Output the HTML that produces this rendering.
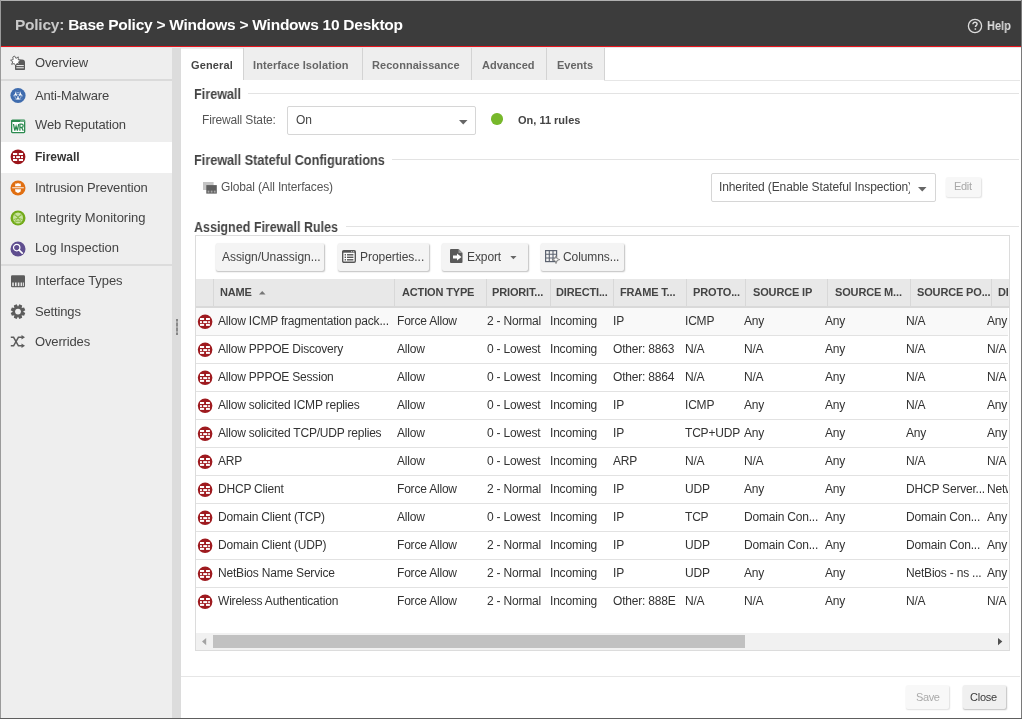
<!DOCTYPE html>
<html><head><meta charset="utf-8"><style>
html,body{margin:0;padding:0;width:1022px;height:719px;overflow:hidden;background:#fff;}
body{position:relative;font-family:"Liberation Sans", sans-serif;}
.t{position:absolute;white-space:nowrap;line-height:normal;font-family:"Liberation Sans", sans-serif;will-change:transform;}
.r{position:absolute;}
</style></head><body>
<div class="r" style="left:0px;top:0px;width:1022px;height:719px;background:#fff;"></div>
<div class="r" style="left:1px;top:1px;width:1020px;height:45px;background:#3c3c3c;"></div>
<div class="r" style="left:1px;top:46px;width:1020px;height:1px;background:#e8141c;"></div>
<div class="r" style="left:1px;top:47px;width:1020px;height:1px;background:#e4e7e7;"></div>
<div class="t" style="left:15px;top:16px;font-size:15.5px;font-weight:700;color:#fff;letter-spacing:-0.25px;"><span style="color:#c9c9c9">Policy:</span> Base Policy &gt; Windows &gt; Windows 10 Desktop</div>
<svg class="r" style="left:967px;top:18px" width="16" height="16" viewBox="0 0 16 16"><circle cx="8" cy="8" r="6.6" fill="none" stroke="#dcdcdc" stroke-width="1.3"/><path d="M5.9 6.3 C5.9 4.9 6.9 4.2 8 4.2 C9.2 4.2 10.1 5 10.1 6 C10.1 7.3 8.4 7.5 8.4 9.1" fill="none" stroke="#dcdcdc" stroke-width="1.4"/><rect x="7.6" y="10.3" width="1.5" height="1.5" fill="#dcdcdc"/></svg>
<div class="t" style="left:987px;top:19px;font-size:12px;transform:scaleX(0.915);transform-origin:0 0;font-weight:700;color:#dedede;letter-spacing:0px;">Help</div>
<div class="r" style="left:1px;top:48px;width:171px;height:670px;background:#eeeeee;"></div>
<div class="r" style="left:1px;top:79px;width:171px;height:2px;background:#dadada;"></div>
<div class="r" style="left:1px;top:264px;width:171px;height:2px;background:#dcdcdc;"></div>
<div class="r" style="left:1px;top:142px;width:171px;height:31px;background:#ffffff;"></div>
<div class="t" style="left:35px;top:55px;font-size:13px;color:#444;letter-spacing:-0.15px;">Overview</div>
<div class="t" style="left:35px;top:88px;font-size:13px;color:#444;letter-spacing:-0.15px;">Anti-Malware</div>
<div class="t" style="left:35px;top:117px;font-size:13px;color:#444;letter-spacing:-0.15px;">Web Reputation</div>
<div class="t" style="left:35px;top:150px;font-size:12px;font-weight:700;color:#333;letter-spacing:0.0px;">Firewall</div>
<div class="t" style="left:35px;top:180px;font-size:13px;color:#444;letter-spacing:-0.15px;">Intrusion Prevention</div>
<div class="t" style="left:35px;top:210px;font-size:13px;color:#444;letter-spacing:0.0px;">Integrity Monitoring</div>
<div class="t" style="left:35px;top:240px;font-size:13px;color:#444;letter-spacing:-0.04px;">Log Inspection</div>
<div class="t" style="left:35px;top:273px;font-size:13px;color:#444;letter-spacing:-0.08px;">Interface Types</div>
<div class="t" style="left:35px;top:304px;font-size:13px;color:#444;letter-spacing:-0.15px;">Settings</div>
<div class="t" style="left:35px;top:334px;font-size:13px;color:#444;letter-spacing:-0.15px;">Overrides</div>
<div class="r" style="left:172px;top:48px;width:9px;height:670px;background:#dcdcdc;"></div>
<div class="r" style="left:176px;top:319px;width:2px;height:16px;background:linear-gradient(#858585 0 2px,#a9a9a9 2px 4px,#8a8a8a 4px 7px,#a9a9a9 7px 9px,#8a8a8a 9px 12px,#a9a9a9 12px 14px,#858585 14px 16px);"></div>
<div class="r" style="left:181px;top:48px;width:423px;height:32px;background:#eeeeee;"></div>
<div class="r" style="left:181px;top:48px;width:63px;height:33px;background:#ffffff;"></div>
<div class="r" style="left:181px;top:48px;width:63px;height:1px;background:#ececec;"></div>
<div class="r" style="left:243px;top:48px;width:1px;height:32px;background:#d3d3d3;"></div>
<div class="r" style="left:362px;top:48px;width:1px;height:32px;background:#d3d3d3;"></div>
<div class="r" style="left:471px;top:48px;width:1px;height:32px;background:#d3d3d3;"></div>
<div class="r" style="left:546px;top:48px;width:1px;height:32px;background:#d3d3d3;"></div>
<div class="r" style="left:604px;top:48px;width:1px;height:32px;background:#d3d3d3;"></div>
<div class="r" style="left:604px;top:80px;width:416px;height:1px;background:#e6e6e6;"></div>
<div class="t" style="left:191px;top:59px;font-size:11px;font-weight:700;color:#444;letter-spacing:0.12px;">General</div>
<div class="t" style="left:253px;top:59px;font-size:11px;font-weight:700;color:#666;letter-spacing:0.08px;">Interface Isolation</div>
<div class="t" style="left:372px;top:59px;font-size:11px;font-weight:700;color:#666;letter-spacing:0.06px;">Reconnaissance</div>
<div class="t" style="left:482px;top:59px;font-size:11px;font-weight:700;color:#666;">Advanced</div>
<div class="t" style="left:557px;top:59px;font-size:11px;font-weight:700;color:#666;">Events</div>
<div class="t" style="left:194px;top:86px;font-size:14px;transform:scaleX(0.902);transform-origin:0 0;font-weight:700;color:#444;letter-spacing:0px;">Firewall</div>
<div class="r" style="left:248px;top:93px;width:771px;height:1px;background:#e3e3e3;"></div>
<div class="t" style="left:202px;top:113px;font-size:12px;color:#555;letter-spacing:-0.15px;">Firewall State:</div>
<div class="r" style="left:287px;top:106px;width:189px;height:29px;background:#fff;border:1px solid #d6d6d6;box-sizing:border-box;border-radius:2px;"></div>
<div class="t" style="left:296px;top:113px;font-size:12px;color:#444;">On</div>
<svg class="r" style="left:459px;top:120px" width="9" height="5"><path d="M0 0H8.5L4.25 4.5Z" fill="#666"/></svg>
<div class="r" style="left:491px;top:113px;width:11.5px;height:11.5px;border-radius:50%;background:#77b82b"></div>
<div class="t" style="left:518px;top:114px;font-size:11px;font-weight:700;color:#444;">On, 11 rules</div>
<div class="t" style="left:194px;top:152px;font-size:14px;transform:scaleX(0.905);transform-origin:0 0;font-weight:700;color:#444;letter-spacing:0px;">Firewall Stateful Configurations</div>
<div class="r" style="left:392px;top:159px;width:627px;height:1px;background:#e3e3e3;"></div>
<svg class="r" style="left:202px;top:181px" width="16" height="14" viewBox="0 0 16 14"><rect x="1" y="1" width="10.6" height="8" fill="#c4c4c4"/><rect x="4.3" y="4.1" width="10.5" height="8.5" fill="#5e5e5e"/><g fill="#a8a8a8"><rect x="5.6" y="9.6" width="1.8" height="2"/><rect x="8.7" y="9.6" width="1.8" height="2"/><rect x="11.8" y="9.6" width="1.8" height="2"/></g></svg>
<div class="t" style="left:221px;top:180px;font-size:12px;color:#555;letter-spacing:-0.15px;">Global (All Interfaces)</div>
<div class="r" style="left:711px;top:173px;width:225px;height:29px;background:#fff;border:1px solid #d6d6d6;box-sizing:border-box;border-radius:2px;"></div>
<div class="t" style="left:719px;top:180px;width:191px;overflow:hidden;font-size:12px;color:#444;letter-spacing:-0.12px">Inherited (Enable Stateful Inspection)</div>
<svg class="r" style="left:918px;top:187px" width="9" height="5"><path d="M0 0H8.5L4.25 4.5Z" fill="#666"/></svg>
<div class="r" style="left:946px;top:177px;width:35px;height:20px;background:#f7f7f7;border-radius:2px;box-shadow:0.5px 1px 1.5px rgba(0,0,0,0.12);"></div>
<div class="t" style="left:954px;top:180px;font-size:11px;color:#a8a8a8;letter-spacing:-0.3px;">Edit</div>
<div class="t" style="left:194px;top:219px;font-size:14px;transform:scaleX(0.894);transform-origin:0 0;font-weight:700;color:#444;letter-spacing:0px;">Assigned Firewall Rules</div>
<div class="r" style="left:346px;top:226px;width:673px;height:1px;background:#e3e3e3;"></div>
<div class="r" style="left:195px;top:235px;width:815px;height:416px;background:#fff;border:1px solid #dcdcdc;box-sizing:border-box;"></div>
<div class="r" style="left:216px;top:243px;width:108px;height:28px;background:#f4f4f4;border-radius:2px;box-shadow:0.5px 1px 1.5px rgba(0,0,0,0.25);"></div>
<div class="r" style="left:338px;top:243px;width:91px;height:28px;background:#f4f4f4;border-radius:2px;box-shadow:0.5px 1px 1.5px rgba(0,0,0,0.25);"></div>
<div class="r" style="left:442px;top:243px;width:86px;height:28px;background:#f4f4f4;border-radius:2px;box-shadow:0.5px 1px 1.5px rgba(0,0,0,0.25);"></div>
<div class="r" style="left:541px;top:243px;width:83px;height:28px;background:#f4f4f4;border-radius:2px;box-shadow:0.5px 1px 1.5px rgba(0,0,0,0.25);"></div>
<div class="t" style="left:222px;top:250px;font-size:12px;color:#444;letter-spacing:-0.05px;">Assign/Unassign...</div>
<div class="t" style="left:360px;top:250px;font-size:12px;color:#444;letter-spacing:-0.04px;">Properties...</div>
<div class="t" style="left:467px;top:250px;font-size:12px;color:#444;letter-spacing:-0.1px;">Export</div>
<div class="t" style="left:563px;top:250px;font-size:12px;color:#444;letter-spacing:-0.1px;">Columns...</div>
<svg class="r" style="left:342px;top:250px" width="14" height="13" viewBox="0 0 14 13"><rect x="0.7" y="0.7" width="12.6" height="11.6" rx="1.2" fill="#fff" stroke="#555" stroke-width="1.4"/><rect x="0.7" y="0.7" width="12.6" height="2" fill="#555"/><rect x="9" y="1.2" width="1.2" height="1" fill="#ccc"/><rect x="11" y="1.2" width="1.2" height="1" fill="#ccc"/><g fill="#555"><rect x="2.6" y="4.1" width="1.4" height="1.4"/><rect x="5" y="4.1" width="6.4" height="1.4"/><rect x="2.6" y="6.6" width="1.4" height="1.4"/><rect x="5" y="6.6" width="6.4" height="1.4"/><rect x="2.6" y="9.1" width="1.4" height="1.4"/><rect x="5" y="9.1" width="6.4" height="1.4"/></g></svg>
<svg class="r" style="left:450px;top:249px" width="13" height="15" viewBox="0 0 13 15"><path d="M0 1Q0 0 1 0H8.5L12.5 4V13Q12.5 14 11.5 14H1Q0 14 0 13Z" fill="#5a5a5a"/><path d="M8.5 0V4H12.5" fill="#999"/><path d="M3 6.5H7V4.5L11.5 8L7 11.5V9.5H3Z" fill="#fff"/></svg>
<svg class="r" style="left:510px;top:255.5px" width="7" height="4"><path d="M0.3 0H6.5L3.4 3.3Z" fill="#666"/></svg>
<svg class="r" style="left:545px;top:250px" width="15" height="15" viewBox="0 0 15 15"><rect x="0.6" y="0.6" width="11" height="11" fill="none" stroke="#5c6370" stroke-width="1.2"/><path d="M4.3 0.6V11.6M8 0.6V11.6M0.6 4.3H11.6M0.6 8H11.6" stroke="#5c6370" stroke-width="1.1"/><path d="M11 5.8L11.9 8.6L14.8 9.6L11.9 10.6L11 13.6L10.1 10.6L7.2 9.6L10.1 8.6Z" fill="#fff" stroke="#777" stroke-width="0.8" stroke-linejoin="round"/></svg>
<div class="r" style="left:196px;top:279px;width:813px;height:27px;background:#e8e8e8;"></div>
<div class="r" style="left:196px;top:306px;width:813px;height:2px;background:#d9d9d9;"></div>
<div class="r" style="left:213px;top:279px;width:1px;height:27px;background:#d8d8d8;"></div>
<div class="r" style="left:394px;top:279px;width:1px;height:27px;background:#d8d8d8;"></div>
<div class="r" style="left:486px;top:279px;width:1px;height:27px;background:#d8d8d8;"></div>
<div class="r" style="left:550px;top:279px;width:1px;height:27px;background:#d8d8d8;"></div>
<div class="r" style="left:613px;top:279px;width:1px;height:27px;background:#d8d8d8;"></div>
<div class="r" style="left:686px;top:279px;width:1px;height:27px;background:#d8d8d8;"></div>
<div class="r" style="left:745px;top:279px;width:1px;height:27px;background:#d8d8d8;"></div>
<div class="r" style="left:827px;top:279px;width:1px;height:27px;background:#d8d8d8;"></div>
<div class="r" style="left:910px;top:279px;width:1px;height:27px;background:#d8d8d8;"></div>
<div class="r" style="left:991px;top:279px;width:1px;height:27px;background:#d8d8d8;"></div>
<div class="r" style="left:196px;top:279px;width:812px;height:27px;overflow:hidden">
<div class="t" style="left:24px;top:7px;font-size:11px;font-weight:700;color:#444;letter-spacing:-0.15px;">NAME</div>
<div class="t" style="left:206px;top:7px;font-size:11px;font-weight:700;color:#444;letter-spacing:-0.15px;">ACTION TYPE</div>
<div class="t" style="left:296px;top:7px;font-size:11px;font-weight:700;color:#444;letter-spacing:-0.15px;">PRIORIT...</div>
<div class="t" style="left:360px;top:7px;font-size:11px;font-weight:700;color:#444;letter-spacing:-0.15px;">DIRECTI...</div>
<div class="t" style="left:424px;top:7px;font-size:11px;font-weight:700;color:#444;letter-spacing:-0.15px;">FRAME T...</div>
<div class="t" style="left:497px;top:7px;font-size:11px;font-weight:700;color:#444;letter-spacing:-0.15px;">PROTO...</div>
<div class="t" style="left:557px;top:7px;font-size:11px;font-weight:700;color:#444;letter-spacing:-0.15px;">SOURCE IP</div>
<div class="t" style="left:639px;top:7px;font-size:11px;font-weight:700;color:#444;letter-spacing:-0.15px;">SOURCE M...</div>
<div class="t" style="left:721px;top:7px;font-size:11px;font-weight:700;color:#444;letter-spacing:-0.15px;">SOURCE PO...</div>
<div class="t" style="left:802px;top:7px;font-size:11px;font-weight:700;color:#444;letter-spacing:-0.15px;">DE</div>
</div>
<svg class="r" style="left:259px;top:291px" width="7" height="4"><path d="M0 3.5H6.5L3.25 0Z" fill="#777"/></svg>
<div class="r" style="left:196px;top:308px;width:812px;height:325px;overflow:hidden">
<div class="r" style="left:0px;top:0px;width:812px;height:27px;background:#f9f9f9;"></div>
<div class="r" style="left:0px;top:27px;width:812px;height:1px;background:#e2e2e2;"></div>
<div class="r" style="left:1px;top:6px;line-height:0"><svg width="16" height="16" viewBox="0 0 16 16"><circle cx="8.1" cy="7.8" r="7.3" fill="#9e1a1f"/><g fill="#fff"><rect x="3" y="4" width="4.1" height="2"/><rect x="9" y="4" width="3.9" height="2"/><rect x="3" y="7.1" width="1.9" height="2"/><rect x="6.2" y="7.1" width="4" height="2"/><rect x="11.2" y="7.1" width="1.7" height="2"/><rect x="3" y="9.9" width="4.1" height="2"/><rect x="9" y="9.9" width="3.9" height="2"/></g></svg></div>
<div class="t" style="left:22px;top:6px;font-size:12px;color:#333;letter-spacing:-0.2px;">Allow ICMP fragmentation pack...</div>
<div class="t" style="left:201px;top:6px;font-size:12px;color:#333;letter-spacing:-0.2px;">Force Allow</div>
<div class="t" style="left:291px;top:6px;font-size:12px;color:#333;letter-spacing:-0.2px;">2 - Normal</div>
<div class="t" style="left:354px;top:6px;font-size:12px;color:#333;letter-spacing:-0.2px;">Incoming</div>
<div class="t" style="left:417px;top:6px;font-size:12px;color:#333;letter-spacing:-0.2px;">IP</div>
<div class="t" style="left:489px;top:6px;font-size:12px;color:#333;letter-spacing:-0.2px;">ICMP</div>
<div class="t" style="left:548px;top:6px;font-size:12px;color:#333;letter-spacing:-0.2px;">Any</div>
<div class="t" style="left:629px;top:6px;font-size:12px;color:#333;letter-spacing:-0.2px;">Any</div>
<div class="t" style="left:710px;top:6px;font-size:12px;color:#333;letter-spacing:-0.2px;">N/A</div>
<div class="t" style="left:791px;top:6px;font-size:12px;color:#333;letter-spacing:-0.2px;">Any</div>
<div class="r" style="left:0px;top:55px;width:812px;height:1px;background:#e2e2e2;"></div>
<div class="r" style="left:1px;top:34px;line-height:0"><svg width="16" height="16" viewBox="0 0 16 16"><circle cx="8.1" cy="7.8" r="7.3" fill="#9e1a1f"/><g fill="#fff"><rect x="3" y="4" width="4.1" height="2"/><rect x="9" y="4" width="3.9" height="2"/><rect x="3" y="7.1" width="1.9" height="2"/><rect x="6.2" y="7.1" width="4" height="2"/><rect x="11.2" y="7.1" width="1.7" height="2"/><rect x="3" y="9.9" width="4.1" height="2"/><rect x="9" y="9.9" width="3.9" height="2"/></g></svg></div>
<div class="t" style="left:22px;top:34px;font-size:12px;color:#333;letter-spacing:-0.2px;">Allow PPPOE Discovery</div>
<div class="t" style="left:201px;top:34px;font-size:12px;color:#333;letter-spacing:-0.2px;">Allow</div>
<div class="t" style="left:291px;top:34px;font-size:12px;color:#333;letter-spacing:-0.2px;">0 - Lowest</div>
<div class="t" style="left:354px;top:34px;font-size:12px;color:#333;letter-spacing:-0.2px;">Incoming</div>
<div class="t" style="left:417px;top:34px;font-size:12px;color:#333;letter-spacing:-0.2px;">Other: 8863</div>
<div class="t" style="left:489px;top:34px;font-size:12px;color:#333;letter-spacing:-0.2px;">N/A</div>
<div class="t" style="left:548px;top:34px;font-size:12px;color:#333;letter-spacing:-0.2px;">N/A</div>
<div class="t" style="left:629px;top:34px;font-size:12px;color:#333;letter-spacing:-0.2px;">Any</div>
<div class="t" style="left:710px;top:34px;font-size:12px;color:#333;letter-spacing:-0.2px;">N/A</div>
<div class="t" style="left:791px;top:34px;font-size:12px;color:#333;letter-spacing:-0.2px;">N/A</div>
<div class="r" style="left:0px;top:83px;width:812px;height:1px;background:#e2e2e2;"></div>
<div class="r" style="left:1px;top:62px;line-height:0"><svg width="16" height="16" viewBox="0 0 16 16"><circle cx="8.1" cy="7.8" r="7.3" fill="#9e1a1f"/><g fill="#fff"><rect x="3" y="4" width="4.1" height="2"/><rect x="9" y="4" width="3.9" height="2"/><rect x="3" y="7.1" width="1.9" height="2"/><rect x="6.2" y="7.1" width="4" height="2"/><rect x="11.2" y="7.1" width="1.7" height="2"/><rect x="3" y="9.9" width="4.1" height="2"/><rect x="9" y="9.9" width="3.9" height="2"/></g></svg></div>
<div class="t" style="left:22px;top:62px;font-size:12px;color:#333;letter-spacing:-0.2px;">Allow PPPOE Session</div>
<div class="t" style="left:201px;top:62px;font-size:12px;color:#333;letter-spacing:-0.2px;">Allow</div>
<div class="t" style="left:291px;top:62px;font-size:12px;color:#333;letter-spacing:-0.2px;">0 - Lowest</div>
<div class="t" style="left:354px;top:62px;font-size:12px;color:#333;letter-spacing:-0.2px;">Incoming</div>
<div class="t" style="left:417px;top:62px;font-size:12px;color:#333;letter-spacing:-0.2px;">Other: 8864</div>
<div class="t" style="left:489px;top:62px;font-size:12px;color:#333;letter-spacing:-0.2px;">N/A</div>
<div class="t" style="left:548px;top:62px;font-size:12px;color:#333;letter-spacing:-0.2px;">N/A</div>
<div class="t" style="left:629px;top:62px;font-size:12px;color:#333;letter-spacing:-0.2px;">Any</div>
<div class="t" style="left:710px;top:62px;font-size:12px;color:#333;letter-spacing:-0.2px;">N/A</div>
<div class="t" style="left:791px;top:62px;font-size:12px;color:#333;letter-spacing:-0.2px;">N/A</div>
<div class="r" style="left:0px;top:111px;width:812px;height:1px;background:#e2e2e2;"></div>
<div class="r" style="left:1px;top:90px;line-height:0"><svg width="16" height="16" viewBox="0 0 16 16"><circle cx="8.1" cy="7.8" r="7.3" fill="#9e1a1f"/><g fill="#fff"><rect x="3" y="4" width="4.1" height="2"/><rect x="9" y="4" width="3.9" height="2"/><rect x="3" y="7.1" width="1.9" height="2"/><rect x="6.2" y="7.1" width="4" height="2"/><rect x="11.2" y="7.1" width="1.7" height="2"/><rect x="3" y="9.9" width="4.1" height="2"/><rect x="9" y="9.9" width="3.9" height="2"/></g></svg></div>
<div class="t" style="left:22px;top:90px;font-size:12px;color:#333;letter-spacing:-0.2px;">Allow solicited ICMP replies</div>
<div class="t" style="left:201px;top:90px;font-size:12px;color:#333;letter-spacing:-0.2px;">Allow</div>
<div class="t" style="left:291px;top:90px;font-size:12px;color:#333;letter-spacing:-0.2px;">0 - Lowest</div>
<div class="t" style="left:354px;top:90px;font-size:12px;color:#333;letter-spacing:-0.2px;">Incoming</div>
<div class="t" style="left:417px;top:90px;font-size:12px;color:#333;letter-spacing:-0.2px;">IP</div>
<div class="t" style="left:489px;top:90px;font-size:12px;color:#333;letter-spacing:-0.2px;">ICMP</div>
<div class="t" style="left:548px;top:90px;font-size:12px;color:#333;letter-spacing:-0.2px;">Any</div>
<div class="t" style="left:629px;top:90px;font-size:12px;color:#333;letter-spacing:-0.2px;">Any</div>
<div class="t" style="left:710px;top:90px;font-size:12px;color:#333;letter-spacing:-0.2px;">N/A</div>
<div class="t" style="left:791px;top:90px;font-size:12px;color:#333;letter-spacing:-0.2px;">Any</div>
<div class="r" style="left:0px;top:139px;width:812px;height:1px;background:#e2e2e2;"></div>
<div class="r" style="left:1px;top:118px;line-height:0"><svg width="16" height="16" viewBox="0 0 16 16"><circle cx="8.1" cy="7.8" r="7.3" fill="#9e1a1f"/><g fill="#fff"><rect x="3" y="4" width="4.1" height="2"/><rect x="9" y="4" width="3.9" height="2"/><rect x="3" y="7.1" width="1.9" height="2"/><rect x="6.2" y="7.1" width="4" height="2"/><rect x="11.2" y="7.1" width="1.7" height="2"/><rect x="3" y="9.9" width="4.1" height="2"/><rect x="9" y="9.9" width="3.9" height="2"/></g></svg></div>
<div class="t" style="left:22px;top:118px;font-size:12px;color:#333;letter-spacing:-0.2px;">Allow solicited TCP/UDP replies</div>
<div class="t" style="left:201px;top:118px;font-size:12px;color:#333;letter-spacing:-0.2px;">Allow</div>
<div class="t" style="left:291px;top:118px;font-size:12px;color:#333;letter-spacing:-0.2px;">0 - Lowest</div>
<div class="t" style="left:354px;top:118px;font-size:12px;color:#333;letter-spacing:-0.2px;">Incoming</div>
<div class="t" style="left:417px;top:118px;font-size:12px;color:#333;letter-spacing:-0.2px;">IP</div>
<div class="t" style="left:489px;top:118px;font-size:12px;color:#333;letter-spacing:-0.2px;">TCP+UDP</div>
<div class="t" style="left:548px;top:118px;font-size:12px;color:#333;letter-spacing:-0.2px;">Any</div>
<div class="t" style="left:629px;top:118px;font-size:12px;color:#333;letter-spacing:-0.2px;">Any</div>
<div class="t" style="left:710px;top:118px;font-size:12px;color:#333;letter-spacing:-0.2px;">Any</div>
<div class="t" style="left:791px;top:118px;font-size:12px;color:#333;letter-spacing:-0.2px;">Any</div>
<div class="r" style="left:0px;top:167px;width:812px;height:1px;background:#e2e2e2;"></div>
<div class="r" style="left:1px;top:146px;line-height:0"><svg width="16" height="16" viewBox="0 0 16 16"><circle cx="8.1" cy="7.8" r="7.3" fill="#9e1a1f"/><g fill="#fff"><rect x="3" y="4" width="4.1" height="2"/><rect x="9" y="4" width="3.9" height="2"/><rect x="3" y="7.1" width="1.9" height="2"/><rect x="6.2" y="7.1" width="4" height="2"/><rect x="11.2" y="7.1" width="1.7" height="2"/><rect x="3" y="9.9" width="4.1" height="2"/><rect x="9" y="9.9" width="3.9" height="2"/></g></svg></div>
<div class="t" style="left:22px;top:146px;font-size:12px;color:#333;letter-spacing:-0.2px;">ARP</div>
<div class="t" style="left:201px;top:146px;font-size:12px;color:#333;letter-spacing:-0.2px;">Allow</div>
<div class="t" style="left:291px;top:146px;font-size:12px;color:#333;letter-spacing:-0.2px;">0 - Lowest</div>
<div class="t" style="left:354px;top:146px;font-size:12px;color:#333;letter-spacing:-0.2px;">Incoming</div>
<div class="t" style="left:417px;top:146px;font-size:12px;color:#333;letter-spacing:-0.2px;">ARP</div>
<div class="t" style="left:489px;top:146px;font-size:12px;color:#333;letter-spacing:-0.2px;">N/A</div>
<div class="t" style="left:548px;top:146px;font-size:12px;color:#333;letter-spacing:-0.2px;">N/A</div>
<div class="t" style="left:629px;top:146px;font-size:12px;color:#333;letter-spacing:-0.2px;">Any</div>
<div class="t" style="left:710px;top:146px;font-size:12px;color:#333;letter-spacing:-0.2px;">N/A</div>
<div class="t" style="left:791px;top:146px;font-size:12px;color:#333;letter-spacing:-0.2px;">N/A</div>
<div class="r" style="left:0px;top:195px;width:812px;height:1px;background:#e2e2e2;"></div>
<div class="r" style="left:1px;top:174px;line-height:0"><svg width="16" height="16" viewBox="0 0 16 16"><circle cx="8.1" cy="7.8" r="7.3" fill="#9e1a1f"/><g fill="#fff"><rect x="3" y="4" width="4.1" height="2"/><rect x="9" y="4" width="3.9" height="2"/><rect x="3" y="7.1" width="1.9" height="2"/><rect x="6.2" y="7.1" width="4" height="2"/><rect x="11.2" y="7.1" width="1.7" height="2"/><rect x="3" y="9.9" width="4.1" height="2"/><rect x="9" y="9.9" width="3.9" height="2"/></g></svg></div>
<div class="t" style="left:22px;top:174px;font-size:12px;color:#333;letter-spacing:-0.2px;">DHCP Client</div>
<div class="t" style="left:201px;top:174px;font-size:12px;color:#333;letter-spacing:-0.2px;">Force Allow</div>
<div class="t" style="left:291px;top:174px;font-size:12px;color:#333;letter-spacing:-0.2px;">2 - Normal</div>
<div class="t" style="left:354px;top:174px;font-size:12px;color:#333;letter-spacing:-0.2px;">Incoming</div>
<div class="t" style="left:417px;top:174px;font-size:12px;color:#333;letter-spacing:-0.2px;">IP</div>
<div class="t" style="left:489px;top:174px;font-size:12px;color:#333;letter-spacing:-0.2px;">UDP</div>
<div class="t" style="left:548px;top:174px;font-size:12px;color:#333;letter-spacing:-0.2px;">Any</div>
<div class="t" style="left:629px;top:174px;font-size:12px;color:#333;letter-spacing:-0.2px;">Any</div>
<div class="t" style="left:710px;top:174px;font-size:12px;color:#333;letter-spacing:-0.2px;">DHCP Server...</div>
<div class="t" style="left:791px;top:174px;font-size:12px;color:#333;letter-spacing:-0.2px;">Netw</div>
<div class="r" style="left:0px;top:223px;width:812px;height:1px;background:#e2e2e2;"></div>
<div class="r" style="left:1px;top:202px;line-height:0"><svg width="16" height="16" viewBox="0 0 16 16"><circle cx="8.1" cy="7.8" r="7.3" fill="#9e1a1f"/><g fill="#fff"><rect x="3" y="4" width="4.1" height="2"/><rect x="9" y="4" width="3.9" height="2"/><rect x="3" y="7.1" width="1.9" height="2"/><rect x="6.2" y="7.1" width="4" height="2"/><rect x="11.2" y="7.1" width="1.7" height="2"/><rect x="3" y="9.9" width="4.1" height="2"/><rect x="9" y="9.9" width="3.9" height="2"/></g></svg></div>
<div class="t" style="left:22px;top:202px;font-size:12px;color:#333;letter-spacing:-0.2px;">Domain Client (TCP)</div>
<div class="t" style="left:201px;top:202px;font-size:12px;color:#333;letter-spacing:-0.2px;">Allow</div>
<div class="t" style="left:291px;top:202px;font-size:12px;color:#333;letter-spacing:-0.2px;">0 - Lowest</div>
<div class="t" style="left:354px;top:202px;font-size:12px;color:#333;letter-spacing:-0.2px;">Incoming</div>
<div class="t" style="left:417px;top:202px;font-size:12px;color:#333;letter-spacing:-0.2px;">IP</div>
<div class="t" style="left:489px;top:202px;font-size:12px;color:#333;letter-spacing:-0.2px;">TCP</div>
<div class="t" style="left:548px;top:202px;font-size:12px;color:#333;letter-spacing:-0.2px;">Domain Con...</div>
<div class="t" style="left:629px;top:202px;font-size:12px;color:#333;letter-spacing:-0.2px;">Any</div>
<div class="t" style="left:710px;top:202px;font-size:12px;color:#333;letter-spacing:-0.2px;">Domain Con...</div>
<div class="t" style="left:791px;top:202px;font-size:12px;color:#333;letter-spacing:-0.2px;">Any</div>
<div class="r" style="left:0px;top:251px;width:812px;height:1px;background:#e2e2e2;"></div>
<div class="r" style="left:1px;top:230px;line-height:0"><svg width="16" height="16" viewBox="0 0 16 16"><circle cx="8.1" cy="7.8" r="7.3" fill="#9e1a1f"/><g fill="#fff"><rect x="3" y="4" width="4.1" height="2"/><rect x="9" y="4" width="3.9" height="2"/><rect x="3" y="7.1" width="1.9" height="2"/><rect x="6.2" y="7.1" width="4" height="2"/><rect x="11.2" y="7.1" width="1.7" height="2"/><rect x="3" y="9.9" width="4.1" height="2"/><rect x="9" y="9.9" width="3.9" height="2"/></g></svg></div>
<div class="t" style="left:22px;top:230px;font-size:12px;color:#333;letter-spacing:-0.2px;">Domain Client (UDP)</div>
<div class="t" style="left:201px;top:230px;font-size:12px;color:#333;letter-spacing:-0.2px;">Force Allow</div>
<div class="t" style="left:291px;top:230px;font-size:12px;color:#333;letter-spacing:-0.2px;">2 - Normal</div>
<div class="t" style="left:354px;top:230px;font-size:12px;color:#333;letter-spacing:-0.2px;">Incoming</div>
<div class="t" style="left:417px;top:230px;font-size:12px;color:#333;letter-spacing:-0.2px;">IP</div>
<div class="t" style="left:489px;top:230px;font-size:12px;color:#333;letter-spacing:-0.2px;">UDP</div>
<div class="t" style="left:548px;top:230px;font-size:12px;color:#333;letter-spacing:-0.2px;">Domain Con...</div>
<div class="t" style="left:629px;top:230px;font-size:12px;color:#333;letter-spacing:-0.2px;">Any</div>
<div class="t" style="left:710px;top:230px;font-size:12px;color:#333;letter-spacing:-0.2px;">Domain Con...</div>
<div class="t" style="left:791px;top:230px;font-size:12px;color:#333;letter-spacing:-0.2px;">Any</div>
<div class="r" style="left:0px;top:279px;width:812px;height:1px;background:#e2e2e2;"></div>
<div class="r" style="left:1px;top:258px;line-height:0"><svg width="16" height="16" viewBox="0 0 16 16"><circle cx="8.1" cy="7.8" r="7.3" fill="#9e1a1f"/><g fill="#fff"><rect x="3" y="4" width="4.1" height="2"/><rect x="9" y="4" width="3.9" height="2"/><rect x="3" y="7.1" width="1.9" height="2"/><rect x="6.2" y="7.1" width="4" height="2"/><rect x="11.2" y="7.1" width="1.7" height="2"/><rect x="3" y="9.9" width="4.1" height="2"/><rect x="9" y="9.9" width="3.9" height="2"/></g></svg></div>
<div class="t" style="left:22px;top:258px;font-size:12px;color:#333;letter-spacing:-0.2px;">NetBios Name Service</div>
<div class="t" style="left:201px;top:258px;font-size:12px;color:#333;letter-spacing:-0.2px;">Force Allow</div>
<div class="t" style="left:291px;top:258px;font-size:12px;color:#333;letter-spacing:-0.2px;">2 - Normal</div>
<div class="t" style="left:354px;top:258px;font-size:12px;color:#333;letter-spacing:-0.2px;">Incoming</div>
<div class="t" style="left:417px;top:258px;font-size:12px;color:#333;letter-spacing:-0.2px;">IP</div>
<div class="t" style="left:489px;top:258px;font-size:12px;color:#333;letter-spacing:-0.2px;">UDP</div>
<div class="t" style="left:548px;top:258px;font-size:12px;color:#333;letter-spacing:-0.2px;">Any</div>
<div class="t" style="left:629px;top:258px;font-size:12px;color:#333;letter-spacing:-0.2px;">Any</div>
<div class="t" style="left:710px;top:258px;font-size:12px;color:#333;letter-spacing:-0.2px;">NetBios - ns ...</div>
<div class="t" style="left:791px;top:258px;font-size:12px;color:#333;letter-spacing:-0.2px;">Any</div>
<div class="r" style="left:1px;top:286px;line-height:0"><svg width="16" height="16" viewBox="0 0 16 16"><circle cx="8.1" cy="7.8" r="7.3" fill="#9e1a1f"/><g fill="#fff"><rect x="3" y="4" width="4.1" height="2"/><rect x="9" y="4" width="3.9" height="2"/><rect x="3" y="7.1" width="1.9" height="2"/><rect x="6.2" y="7.1" width="4" height="2"/><rect x="11.2" y="7.1" width="1.7" height="2"/><rect x="3" y="9.9" width="4.1" height="2"/><rect x="9" y="9.9" width="3.9" height="2"/></g></svg></div>
<div class="t" style="left:22px;top:286px;font-size:12px;color:#333;letter-spacing:-0.2px;">Wireless Authentication</div>
<div class="t" style="left:201px;top:286px;font-size:12px;color:#333;letter-spacing:-0.2px;">Force Allow</div>
<div class="t" style="left:291px;top:286px;font-size:12px;color:#333;letter-spacing:-0.2px;">2 - Normal</div>
<div class="t" style="left:354px;top:286px;font-size:12px;color:#333;letter-spacing:-0.2px;">Incoming</div>
<div class="t" style="left:417px;top:286px;font-size:12px;color:#333;letter-spacing:-0.2px;">Other: 888E</div>
<div class="t" style="left:489px;top:286px;font-size:12px;color:#333;letter-spacing:-0.2px;">N/A</div>
<div class="t" style="left:548px;top:286px;font-size:12px;color:#333;letter-spacing:-0.2px;">N/A</div>
<div class="t" style="left:629px;top:286px;font-size:12px;color:#333;letter-spacing:-0.2px;">Any</div>
<div class="t" style="left:710px;top:286px;font-size:12px;color:#333;letter-spacing:-0.2px;">N/A</div>
<div class="t" style="left:791px;top:286px;font-size:12px;color:#333;letter-spacing:-0.2px;">N/A</div>
</div>
<div class="r" style="left:196px;top:633px;width:813px;height:17px;background:#f1f1f1;"></div>
<div class="r" style="left:213px;top:635px;width:532px;height:13px;background:#c1c1c1;"></div>
<svg class="r" style="left:202px;top:638px" width="5" height="8"><path d="M4.2 0V7.2L0 3.6Z" fill="#a3a3a3"/></svg>
<svg class="r" style="left:998px;top:638px" width="5" height="8"><path d="M0 0V7.2L4.3 3.6Z" fill="#505050"/></svg>
<div class="r" style="left:181px;top:676px;width:839px;height:1px;background:#e6e6e6;"></div>
<div class="r" style="left:906px;top:685px;width:43px;height:24px;background:#f8f8f8;border-radius:2px;box-shadow:0.5px 1px 1.5px rgba(0,0,0,0.12);"></div>
<div class="r" style="left:963px;top:685px;width:43px;height:24px;background:#f0f0f0;border-radius:2px;box-shadow:0.5px 1px 1.5px rgba(0,0,0,0.25);"></div>
<div class="t" style="left:916px;top:691px;font-size:11px;color:#aaa;letter-spacing:-0.4px;">Save</div>
<div class="t" style="left:970px;top:691px;font-size:11px;color:#3a3a3a;letter-spacing:-0.25px;">Close</div>
<div class="r" style="left:0px;top:0px;width:1022px;height:1px;background:#b0b0b0;"></div>
<div class="r" style="left:0px;top:0px;width:1px;height:719px;background:#9a9a9a;"></div>
<div class="r" style="left:1021px;top:0px;width:1px;height:719px;background:#7a7a7a;"></div>
<div class="r" style="left:0px;top:718px;width:1022px;height:1px;background:#5e5e5e;"></div>
<svg class="r" style="left:10px;top:55px" width="16" height="16" viewBox="0 0 16 16"><path d="M5 4.5H12Q15 4.5 15 7.5V14.2Q15 15 14.2 15H5.8Q5 15 5 14.2Z" fill="#5a5a5a"/><rect x="6.3" y="10" width="7.5" height="1.1" fill="#e8e8e8"/><rect x="6.3" y="12.2" width="7.5" height="1.1" fill="#e8e8e8"/><path d="M4.6 1L5.9 3.4L8.3 1.9L8.2 4.7L10.6 5.3L8.5 6.9L9.6 9.3L6.9 8.6L5.6 10.8L4.3 8.5L1.6 9.3L2.8 6.8L0.6 5.2L3.2 4.6L2.8 2Z" fill="#fff" stroke="#4a4a4a" stroke-width="0.8" stroke-linejoin="round"/></svg>
<svg class="r" style="left:10px;top:87px" width="16" height="17" viewBox="0 0 16 17"><defs><mask id="bh"><circle cx="8.00" cy="6.70" r="2.9" fill="#fff"/><circle cx="9.82" cy="9.85" r="2.9" fill="#fff"/><circle cx="6.18" cy="9.85" r="2.9" fill="#fff"/><circle cx="8.00" cy="5.50" r="2.2" fill="#000"/><circle cx="10.86" cy="10.45" r="2.2" fill="#000"/><circle cx="5.14" cy="10.45" r="2.2" fill="#000"/><circle cx="8" cy="8.8" r="1.0" fill="#000"/></mask></defs><circle cx="8" cy="8.5" r="7.6" fill="#3f6cae"/><rect x="0" y="0" width="16" height="17" fill="#fff" mask="url(#bh)"/><circle cx="8" cy="8.8" r="3.3" fill="none" stroke="#fff" stroke-width="0.7" opacity="0.7"/></svg>
<svg class="r" style="left:11px;top:119px" width="15" height="15" viewBox="0 0 15 15"><rect x="0.65" y="1.15" width="13" height="12.4" rx="0.8" fill="#fff" stroke="#2b8a4f" stroke-width="1.3"/><rect x="0.65" y="1" width="9" height="2" fill="#2b8a4f"/><rect x="9.6" y="1" width="4" height="2" fill="#6aae85"/><g fill="none" stroke="#2b8a4f" stroke-width="1.25" stroke-linejoin="miter"><path d="M2.5 5L3.8 11.6L5.1 7.2L6.4 11.6L7.7 5"/><path d="M8.9 11.8V5.1H10.7Q12.2 5.1 12.2 6.8Q12.2 8.4 10.7 8.4H8.9M10.6 8.4L12.3 11.8"/></g></svg>
<svg class="r" style="left:10px;top:149px" width="16" height="16" viewBox="0 0 16 16"><circle cx="8" cy="7.8" r="7.4" fill="#9b151b"/><g fill="#fff"><rect x="3" y="4" width="4.2" height="2"/><rect x="8.8" y="4" width="4.2" height="2"/><rect x="3" y="7.1" width="2" height="2"/><rect x="6.2" y="7.1" width="3.8" height="2"/><rect x="11" y="7.1" width="2" height="2"/><rect x="3" y="10" width="4.2" height="2"/><rect x="8.8" y="10" width="4.2" height="2"/></g></svg>
<svg class="r" style="left:10px;top:180px" width="16" height="16" viewBox="0 0 16 16"><circle cx="8" cy="8" r="7.5" fill="#e06f12"/><g fill="#fff"><path d="M5 6.3L5.5 3.2L6.7 3.8L8 3L9.3 3.8L10.5 3.2L11 6.3Z"/><rect x="2.2" y="7.2" width="11.6" height="1.1" opacity="0.85"/><path d="M5 9.3H11L10.5 11.8L8 13L5.5 11.8Z"/></g></svg>
<svg class="r" style="left:10px;top:210px" width="16" height="16" viewBox="0 0 16 16"><circle cx="8" cy="8" r="7.5" fill="#72aa19"/><ellipse cx="8" cy="8" rx="5" ry="5.6" fill="#c9e3a0"/><g fill="none" stroke="#86b93a" stroke-width="0.9"><path d="M4.2 3.6L11.8 12.4M11.8 3.6L4.2 12.4"/><path d="M3.6 9.6Q8 6.6 12.4 9.6M4.6 12.4Q8 9.6 11.4 12.4M4.4 5.2Q8 8 11.6 5.2"/></g></svg>
<svg class="r" style="left:10px;top:241px" width="16" height="16" viewBox="0 0 16 16"><circle cx="8" cy="8" r="7.5" fill="#5f4e8f"/><circle cx="6.7" cy="6.6" r="3.2" fill="none" stroke="#fff" stroke-width="1.2"/><path d="M9.1 9L12.2 12.1" stroke="#fff" stroke-width="1.7" stroke-linecap="round"/></svg>
<svg class="r" style="left:11px;top:275px" width="14" height="13" viewBox="0 0 14 13"><rect x="0" y="0.3" width="14" height="12" rx="1.2" fill="#5c5c5c"/><g fill="#e6e6e6"><rect x="1.2" y="7.5" width="1.6" height="3.6"/><rect x="4" y="7.5" width="1.6" height="3.6"/><rect x="6.8" y="7.5" width="1.6" height="3.6"/><rect x="9.6" y="7.5" width="1.6" height="3.6"/><rect x="12" y="7.5" width="0.9" height="3.6"/></g></svg>
<svg class="r" style="left:10px;top:304px" width="16" height="16" viewBox="0 0 16 16"><path d="M9.34 0.32 L12.19 1.50 L11.63 3.88 L11.72 3.97 L14.10 3.41 L15.28 6.26 L13.20 7.53 L13.20 7.67 L15.28 8.94 L14.10 11.79 L11.72 11.23 L11.63 11.32 L12.19 13.70 L9.34 14.88 L8.07 12.80 L7.93 12.80 L6.66 14.88 L3.81 13.70 L4.37 11.32 L4.28 11.23 L1.90 11.79 L0.72 8.94 L2.80 7.67 L2.80 7.53 L0.72 6.26 L1.90 3.41 L4.28 3.97 L4.37 3.88 L3.81 1.50 L6.66 0.32 L7.93 2.40 L8.07 2.40Z" fill="#5c5c5c"/><circle cx="8" cy="7.6" r="2.9" fill="#eee"/></svg>
<svg class="r" style="left:10px;top:335px" width="16" height="14" viewBox="0 0 16 14"><g fill="none" stroke="#5c5c5c" stroke-width="1.5"><path d="M0.8 2.3H3.6L8.4 10.8H12"/><path d="M0.8 10.8H3.6L8.4 2.3H12"/></g><path d="M11.5 0L15 2.3L11.5 4.6Z M11.5 8.5L15 10.8L11.5 13.1Z" fill="#5c5c5c"/></svg>
</body></html>
